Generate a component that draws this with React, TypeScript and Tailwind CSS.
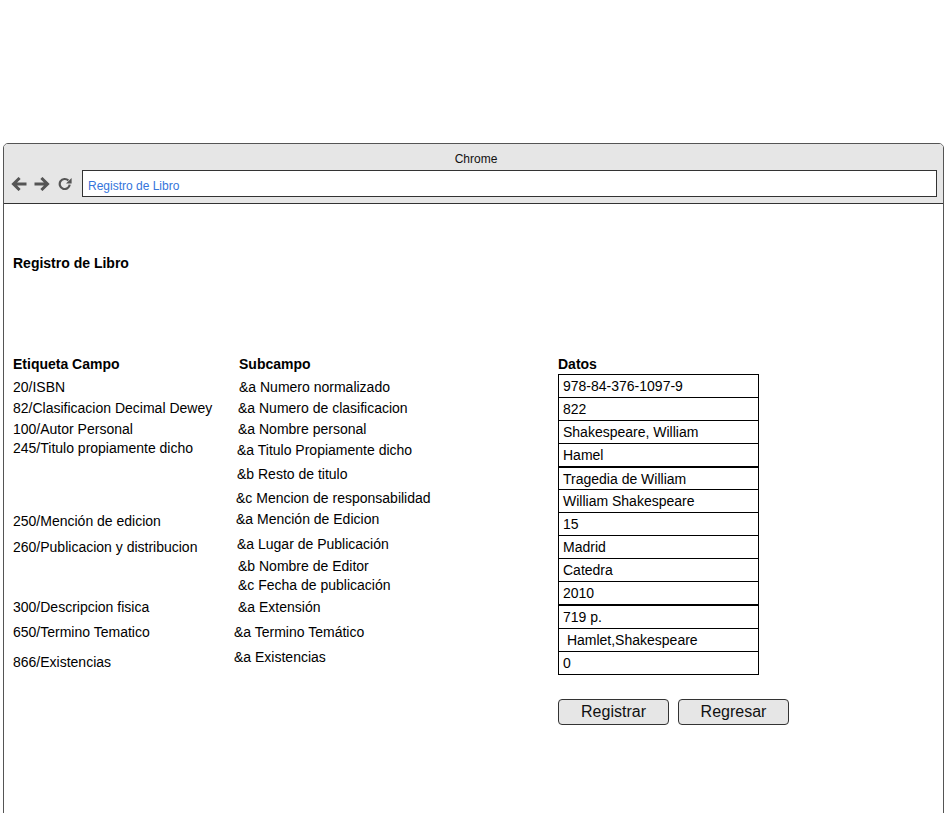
import React from "react";

const leftRows: { t: string; c: string }[] = [
  { t: "20/ISBN", c: "mt-[7px]" },
  { t: "82/Clasificacion Decimal Dewey", c: "mt-[5px]" },
  { t: "100/Autor Personal", c: "mt-[5px]" },
  { t: "245/Titulo propiamente dicho", c: "mt-[3px]" },
  { t: "250/Mención de edicion", c: "mt-[57px]" },
  { t: "260/Publicacion y distribucion", c: "mt-[10px]" },
  { t: "300/Descripcion fisica", c: "mt-[44px]" },
  { t: "650/Termino Tematico", c: "mt-[9px]" },
  { t: "866/Existencias", c: "mt-[14px]" },
];

const subRows: { t: string; c: string }[] = [
  { t: "&a Numero normalizado", c: "mt-[7px] pl-[5px]" },
  { t: "&a Numero de clasificacion", c: "mt-[5px] pl-[4px]" },
  { t: "&a Nombre personal", c: "mt-[5px] pl-[4px]" },
  { t: "&a Titulo Propiamente dicho", c: "mt-[5px] pl-[3px]" },
  { t: "&b Resto de titulo", c: "mt-[8px] pl-[3px]" },
  { t: "&c Mencion de responsabilidad", c: "mt-[8px] pl-[2px]" },
  { t: "&a Mención de Edicion", c: "mt-[5px] pl-[2px]" },
  { t: "&a Lugar de Publicación", c: "mt-[9px] pl-[3px]" },
  { t: "&b Nombre de Editor", c: "mt-[6px] pl-[4px]" },
  { t: "&c Fecha de publicación", c: "mt-[3px] pl-[4px]" },
  { t: "&a Extensión", c: "mt-[6px] pl-[4px]" },
  { t: "&a Termino Temático", c: "mt-[9px] pl-0" },
  { t: "&a Existencias", c: "mt-[9px] pl-0" },
];

const dataRows: { t: string; c: string }[] = [
  { t: "978-84-376-1097-9", c: "h-[22px] leading-[22px]" },
  { t: "822", c: "h-[23px] leading-[22px] border-t border-black" },
  { t: "Shakespeare, William", c: "h-[23px] leading-[22px] border-t border-black" },
  { t: "Hamel", c: "h-[23px] leading-[22px] border-t border-black" },
  { t: "Tragedia de William", c: "h-[23px] leading-[23px] border-t-2 border-black" },
  { t: "William Shakespeare", c: "h-[23px] leading-[22px] border-t border-black" },
  { t: "15", c: "h-[23px] leading-[22px] border-t border-black" },
  { t: "Madrid", c: "h-[23px] leading-[22px] border-t border-black" },
  { t: "Catedra", c: "h-[23px] leading-[22px] border-t border-black" },
  { t: "2010", c: "h-[23px] leading-[22px] border-t border-black" },
  { t: "719 p.", c: "h-[24px] leading-[23px] border-t-2 border-black" },
  { t: " Hamlet,Shakespeare", c: "h-[23px] leading-[23px] border-t border-black" },
  { t: "0", c: "h-[23px] leading-[23px] border-t border-black" },
];

function BackIcon() {
  return (
    <svg width="16" height="14" viewBox="0 0 16 14" className="block">
      <path d="M15.5 7H2.5M8.6 1L2.5 7L8.6 13" fill="none" stroke="#555" strokeWidth="3" strokeLinejoin="miter" />
    </svg>
  );
}

function ForwardIcon() {
  return (
    <svg width="16" height="14" viewBox="0 0 16 14" className="block">
      <path d="M0.5 7H13.5M7.4 1L13.5 7L7.4 13" fill="none" stroke="#555" strokeWidth="3" strokeLinejoin="miter" />
    </svg>
  );
}

function ReloadIcon() {
  return (
    <svg width="14" height="13" viewBox="0 0 14 13" className="block">
      <path d="M10.4 3.6A5 5 0 1 0 11.7 7.6" fill="none" stroke="#555" strokeWidth="2.2" />
      <path d="M13.6 1V6.6H8Z" fill="#555" />
    </svg>
  );
}

export default function App() {
  return (
    <div className="w-[947px] h-[813px] overflow-hidden bg-white font-['Liberation_Sans',Arial,sans-serif] text-black">
      <div className="mt-[143px] mx-[3px] h-[700px] border border-[#555] rounded-t-[5px] flex flex-col">
        {/* browser header */}
        <div className="h-[60px] shrink-0 bg-[#e6e6e6] border-b border-[#333] rounded-t-[4px] flex flex-col pt-[8px]">
          <div className="h-[14px] leading-[14px] text-[12px] text-center pl-[5px] text-[#111]">Chrome</div>
          <div className="mt-[4px] h-[27px] flex items-center pl-[7px] pr-[6px]">
            <BackIcon />
            <div className="ml-[7px]">
              <ForwardIcon />
            </div>
            <div className="ml-[8px]">
              <ReloadIcon />
            </div>
            <div className="ml-[10px] flex-1 h-[27px] bg-white border-[1.5px] border-[#333] flex items-center pl-[5px] pt-[4px]">
              <span className="text-[12px] leading-[14px] text-[#3474db]">Registro de Libro</span>
            </div>
          </div>
        </div>

        {/* page content */}
        <div className="flex-1 pt-[51px] pl-[9px]">
          <div className="text-[14px] leading-[16px] font-bold">Registro de Libro</div>

          <div className="mt-[85px] flex text-[14px] leading-[16px]">
            {/* column 1 */}
            <div className="w-[221px] flex flex-col">
              <div className="h-[16px] font-bold">Etiqueta Campo</div>
              {leftRows.map((r) => (
                <div key={r.t} className={"h-[16px] whitespace-nowrap " + r.c}>
                  {r.t}
                </div>
              ))}
            </div>

            {/* column 2 */}
            <div className="w-[324px] flex flex-col">
              <div className="h-[16px] font-bold pl-[5px]">Subcampo</div>
              {subRows.map((r) => (
                <div key={r.t} className={"h-[16px] whitespace-nowrap " + r.c}>
                  {r.t}
                </div>
              ))}
            </div>

            {/* column 3 */}
            <div className="flex flex-col">
              <div className="h-[16px] font-bold">Datos</div>
              <div className="mt-[2px] w-[201px] border border-black flex flex-col">
                {dataRows.map((r) => (
                  <div key={r.t} className={"pl-[4px] whitespace-pre text-[14px] " + r.c}>
                    {r.t}
                  </div>
                ))}
              </div>
              <div className="mt-[24px] flex gap-[9px]">
                <button className="w-[111px] h-[26px] bg-[#e6e6e6] border border-[#333] rounded-[4px] text-[16px] leading-[18px] text-[#111]">
                  Registrar
                </button>
                <button className="w-[111px] h-[26px] bg-[#e6e6e6] border border-[#333] rounded-[4px] text-[16px] leading-[18px] text-[#111]">
                  Regresar
                </button>
              </div>
            </div>
          </div>
        </div>
      </div>
    </div>
  );
}
